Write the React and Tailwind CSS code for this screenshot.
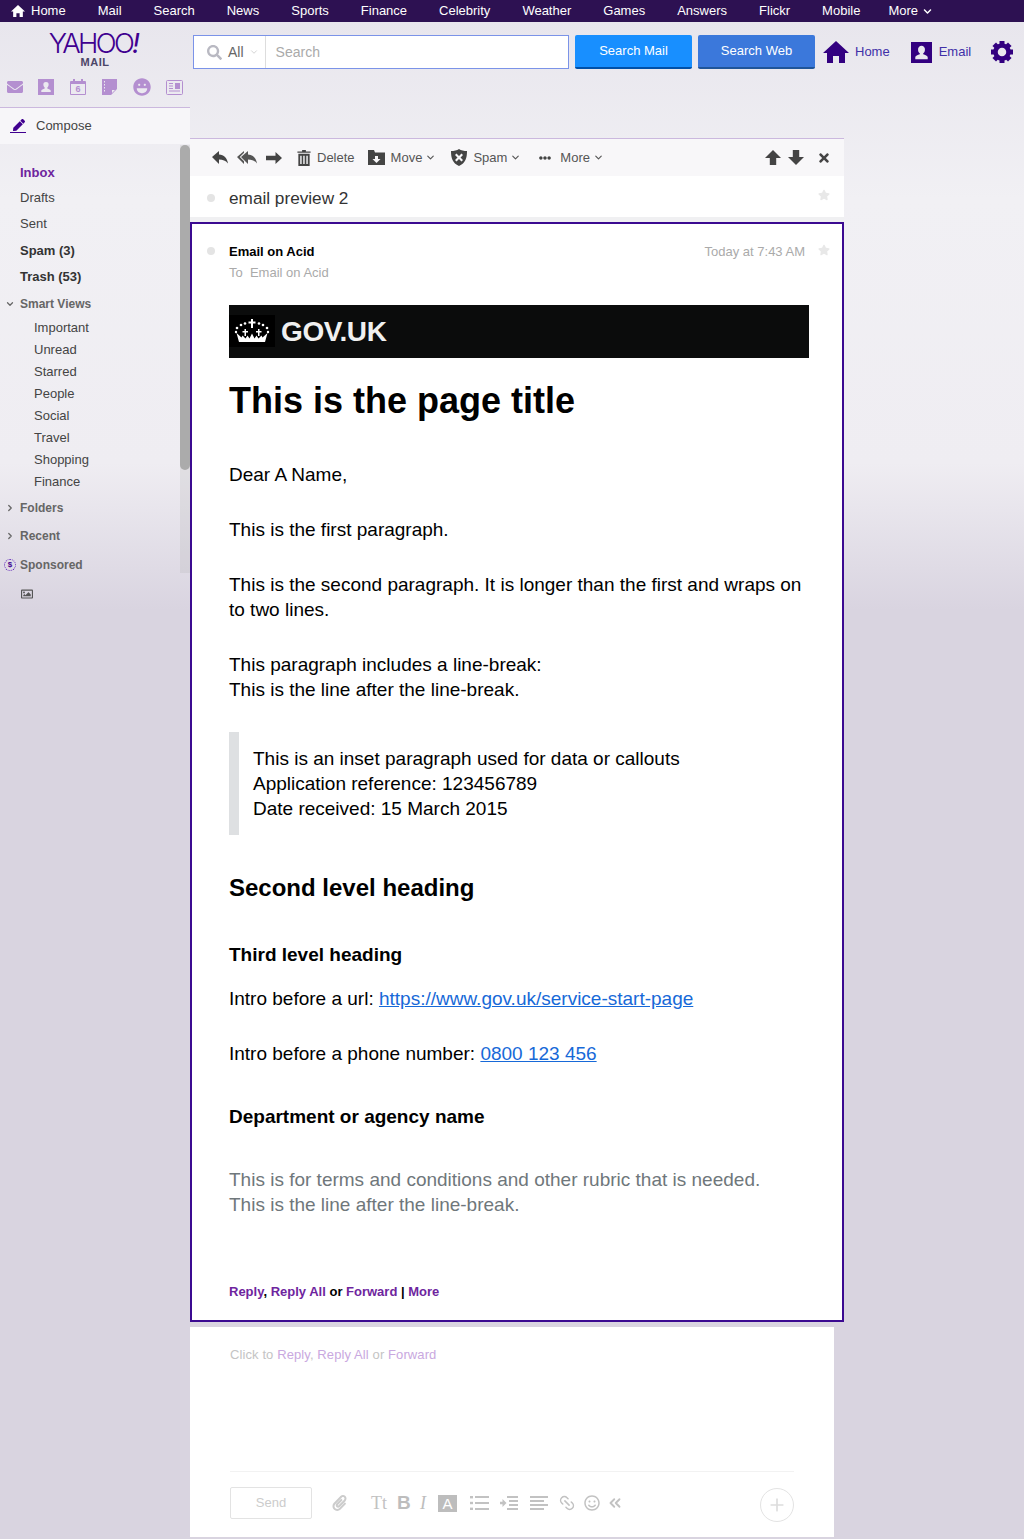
import React from 'react';
import {
  FaChevronDown, FaSearch, FaTimes, FaStar, FaPaperclip, FaRegSmile,
  FaEllipsisH, FaPen, FaEnvelope, FaLaugh, FaRegImage,
} from 'react-icons/fa';
import { LuChevronDown, LuChevronRight, LuChevronsLeft, LuPlus, LuLink2 } from 'react-icons/lu';

const topLinks = ['Mail', 'Search', 'News', 'Sports', 'Finance', 'Celebrity', 'Weather', 'Games', 'Answers', 'Flickr', 'Mobile'];
const smartViews = ['Important', 'Unread', 'Starred', 'People', 'Social', 'Travel', 'Shopping', 'Finance'];

const HouseIcon = ({ className }) => (
  <svg viewBox="0 0 26 22" className={className} fill="currentColor">
    <path d="M13 0 26 12h-4v10h-6v-7h-6v7H4V12H0z" />
  </svg>
);

const ContactIcon = ({ className }) => (
  <svg viewBox="0 0 22 22" className={className} fill="currentColor">
    <path fillRule="evenodd" d="M0 0h22v22H0zM11 4a3.600 3.600 0 0 0-3.600 4c0 1.700.8 3 1.800 3.700v1.200c-2 .7-4.700 1.500-4.700 3.100V18h13v-2c0-1.600-2.700-2.400-4.700-3.100v-1.200c1-.7 1.800-2 1.800-3.700A3.600 3.600 0 0 0 11 4z" />
  </svg>
);

const CalendarIcon = ({ className }) => (
  <div className={`relative ${className}`}>
    <div className="absolute inset-x-0 bottom-0 top-[2px] border border-[#b48fd0] rounded-[1px] border-t-[3px]" />
    <div className="absolute left-[3px] top-0 w-[2px] h-[3px] bg-[#b48fd0]" />
    <div className="absolute right-[3px] top-0 w-[2px] h-[3px] bg-[#b48fd0]" />
    <div className="absolute inset-x-0 top-[5px] text-center text-[9px] leading-[11px] font-bold text-[#b48fd0]">6</div>
  </div>
);

const NotebookIcon = ({ className }) => (
  <svg viewBox="0 0 15 16" className={className} fill="currentColor">
    <path fillRule="evenodd" d="M0 0h15v10l-6 6H0zM2 2v1.500h1V2zm0 3v1.500h1V5zm0 3v1.500h1V8zm0 3v1.500h1V11zm8 0v3l3-3z" />
  </svg>
);

const NewsIcon = ({ className }) => (
  <svg viewBox="0 0 17 15" className={className} fill="none" stroke="currentColor">
    <rect x="0.500" y="0.500" width="16" height="14" rx="1" />
    <path d="M3 3.500h4M3 6h4M3 8.500h4M3 11h11" />
    <path d="M9 3h5v6H9z" fill="currentColor" stroke="none" />
  </svg>
);

const ReplyIcon = ({ className }) => (
  <svg viewBox="0 0 16 13" className={className} fill="currentColor">
    <path d="M0 6 7 0v3.500C12 3.500 15 7 16 12.500 13.500 9.500 11 8.500 7 8.500V13z" />
  </svg>
);

const ReplyAllIcon = ({ className }) => (
  <svg viewBox="0 0 20 13" className={className} fill="currentColor">
    <path d="M0 6 7 0v1.800L2.800 6 7 10.200V13z" />
    <path d="M4 6l7-6v3.500C16 3.500 19 7 20 12.500 17.500 9.500 15 8.500 11 8.500V13z" />
  </svg>
);

const RightIcon = ({ className }) => (
  <svg viewBox="0 0 16 12" className={className} fill="currentColor">
    <path d="M16 6 9.500 0v3.800H0v4.400h9.500V12z" />
  </svg>
);

const UpIcon = ({ className }) => (
  <svg viewBox="0 0 16 15" className={className} fill="currentColor">
    <path d="M8 0 16 8h-4.800v7H4.800V8H0z" />
  </svg>
);

const TrashIcon = ({ className }) => (
  <svg viewBox="0 0 14 17" className={className} fill="currentColor">
    <path fillRule="evenodd" d="M5 0h4v1.500h5V3H0V1.500h5zM1 4h12v13H1zM3 6v9h1.500V6zm3.200 0v9h1.500V6zm3.300 0v9H11V6z" />
  </svg>
);

const MoveIcon = ({ className }) => (
  <svg viewBox="0 0 17 15" className={className} fill="currentColor">
    <path fillRule="evenodd" d="M0 0h6l1 2.500h10V15H0zM7 6v3H4.500l4 4 4-4H10V6z" />
  </svg>
);

const ShieldIcon = ({ className }) => (
  <svg viewBox="0 0 16 17" className={className} fill="currentColor">
    <path fillRule="evenodd" d="M8 0c2 1.500 5 2 8 2 0 7-1.500 12-8 15C1.500 14 0 9 0 2c3 0 6-.5 8-2zM5.500 4.500 4 6l2.500 2.500L4 11l1.500 1.500L8 10l2.500 2.500L12 11 9.500 8.500 12 6l-1.500-1.500L8 7z" />
  </svg>
);

const GearIcon = ({ className }) => (
  <svg viewBox="0 0 22 22" className={className} fill="currentColor">
    <circle cx="11" cy="11" r="6.500" fill="none" stroke="currentColor" strokeWidth="4.500" />
    <rect x="8.500" y="0" width="5" height="4" />
    <rect x="8.500" y="18" width="5" height="4" />
    <rect x="0" y="8.500" width="4" height="5" />
    <rect x="18" y="8.500" width="4" height="5" />
    <rect x="8.500" y="0" width="5" height="4" transform="rotate(45 11 11)" />
    <rect x="8.500" y="18" width="5" height="4" transform="rotate(45 11 11)" />
    <rect x="0" y="8.500" width="4" height="5" transform="rotate(45 11 11)" />
    <rect x="18" y="8.500" width="4" height="5" transform="rotate(45 11 11)" />
  </svg>
);

const ListIcon = ({ className }) => (
  <svg viewBox="0 0 19 14" className={className} fill="currentColor">
    <rect x="0" y="0" width="3" height="2.400" /><rect x="5" y="0" width="14" height="2" />
    <rect x="0" y="5.800" width="3" height="2.400" /><rect x="5" y="6" width="14" height="2" />
    <rect x="0" y="11.600" width="3" height="2.400" /><rect x="5" y="12" width="14" height="2" />
  </svg>
);

const IndentIcon = ({ className }) => (
  <svg viewBox="0 0 18 14" className={className} fill="currentColor">
    <path d="M0 5.800h2.500V3L6.500 7l-4 4V8.200H0z" />
    <rect x="7" y="0" width="11" height="2" /><rect x="9" y="4" width="9" height="2" />
    <rect x="9" y="8" width="9" height="2" /><rect x="7" y="12" width="11" height="2" />
  </svg>
);

const AlignIcon = ({ className }) => (
  <svg viewBox="0 0 18 14" className={className} fill="currentColor">
    <rect x="0" y="0" width="18" height="2" /><rect x="0" y="4" width="14" height="2" />
    <rect x="0" y="8" width="18" height="2" /><rect x="0" y="12" width="14" height="2" />
  </svg>
);

// small crown for the gov.uk banner, dots + crosses on a band
const Crown = () => (
  <svg viewBox="0 0 36 28" className="w-[36px] h-[28px]" fill="#fff">
    <path d="M5 25h26l2.500-9-5 4.500-1-2-3 3-2-3-2 3-2.500-5-2.500 5-2-3-2 3-3-3-1 2-5-4.500z" />
    <rect x="17" y="2" width="2" height="9" />
    <rect x="14.500" y="4.500" width="7" height="2" />
    <circle cx="11" cy="6.500" r="1.300" /><circle cx="25" cy="6.500" r="1.300" />
    <circle cx="7" cy="8" r="1.300" /><circle cx="29" cy="8" r="1.300" />
    <circle cx="3" cy="11" r="1.300" /><circle cx="33" cy="11" r="1.300" />
    <circle cx="2" cy="15" r="1.200" /><circle cx="34" cy="15" r="1.200" />
    <rect x="10.500" y="12" width="1.500" height="7" />
    <rect x="24" y="12" width="1.500" height="7" />
    <rect x="8.500" y="14" width="5.500" height="1.500" />
    <rect x="22" y="14" width="5.500" height="1.500" />
  </svg>
);

const NavSide = () => (
  <div className="w-[190px] shrink-0">
    <div className="h-[47px] flex flex-col items-center pt-[9px]">
      <div className="mr-[4px] font-['Inter',sans-serif] font-light text-[27.500px] leading-[24px] tracking-[-2.700px] text-[#400090] whitespace-nowrap">
        YAHOO<span className="italic font-normal">!</span>
      </div>
      <div className="mt-[2px] text-[11px] leading-[11px] font-bold tracking-[0.500px] text-[#4c4668]">MAIL</div>
    </div>
    <div className="h-[36px] mb-[2px] flex items-center text-[#b48fd0]">
      <FaEnvelope className="w-[16px] h-[16px] ml-[7px]" />
      <ContactIcon className="w-[16px] h-[16px] ml-[15px]" />
      <CalendarIcon className="w-[16px] h-[16px] ml-[16px]" />
      <NotebookIcon className="w-[15px] h-[16px] ml-[16px]" />
      <FaLaugh className="w-[18px] h-[18px] ml-[16px]" />
      <NewsIcon className="w-[17px] h-[15px] ml-[15px]" />
    </div>
    <div className="h-[37px] border-t border-[#cbb8de] bg-[#f7f6f9] flex items-center text-[13px] text-[#444]">
      <span className="ml-[10px] w-[16px] border-b border-[#400090] pb-[1px]">
        <FaPen className="w-[12px] h-[12px] text-[#400090] ml-[3px]" />
      </span>
      <span className="ml-[10px]">Compose</span>
    </div>
    <div className="relative pt-[16px] pl-[20px] text-[13px] text-[#444]">
      <div className="absolute right-0 top-[1px] w-[10px] h-[428px] bg-[#a9a9a9]/20" />
      <div className="absolute right-0 top-[1px] w-[10px] h-[325px] bg-[#ababab] rounded-t-[5px] rounded-b-[5px]" />
      <div className="h-[25px] flex items-center font-bold text-[#6e259e]">Inbox</div>
      <div className="h-[26px] flex items-center">Drafts</div>
      <div className="h-[26px] flex items-center mb-[1px]">Sent</div>
      <div className="h-[26px] flex items-center font-bold text-[#333]">Spam (3)</div>
      <div className="h-[26px] flex items-center font-bold text-[#333] mb-[1px]">Trash (53)</div>
      <div className="h-[26px] flex items-center font-bold text-[12px] text-[#666] relative">
        <LuChevronDown className="absolute -left-[15px] top-[8px] w-[10px] h-[10px]" strokeWidth={3} />
        Smart Views
      </div>
      <div className="pl-[14px]">
        {smartViews.map((v) => (
          <div key={v} className="h-[22px] flex items-center">{v}</div>
        ))}
      </div>
      <div className="mt-[2px] h-[26px] flex items-center font-bold text-[12px] text-[#666] relative">
        <LuChevronRight className="absolute -left-[15px] top-[8px] w-[10px] h-[10px]" strokeWidth={3} />
        Folders
      </div>
      <div className="mt-[2px] h-[26px] flex items-center font-bold text-[12px] text-[#666] relative">
        <LuChevronRight className="absolute -left-[15px] top-[8px] w-[10px] h-[10px]" strokeWidth={3} />
        Recent
      </div>
      <div className="mt-[3px] h-[26px] flex items-center font-bold text-[12px] text-[#666] relative">
        <span className="absolute -left-[16px] top-[7px] w-[12px] h-[12px] rounded-full border border-dotted border-[#5b21b6] text-[8px] leading-[10px] text-center font-bold text-[#400090]">$</span>
        Sponsored
      </div>
      <FaRegImage className="mt-[10px] w-[14px] h-[12px] text-[#555]" />
    </div>
  </div>
);

const SearchBar = () => (
  <div className="h-[116px] pt-[13px] pl-[3px] flex items-start">
    <div className="w-[376px] h-[34px] border border-[#7b93e8] bg-white flex items-center text-[14px]">
      <FaSearch className="ml-[13px] w-[15px] h-[15px] text-[#b9b9c2]" />
      <span className="ml-[6px] text-[#666]">All</span>
      <LuChevronDown className="ml-[5px] w-[10px] h-[10px] text-[#ccc]" />
      <span className="ml-[6px] h-full border-l border-[#ddd]" />
      <span className="ml-[10px] text-[#aaa]">Search</span>
    </div>
    <button className="ml-[6px] w-[117px] h-[34px] rounded-[2px] bg-[#188fff] border-b-2 border-[#0050a8] text-white text-[13px]">Search Mail</button>
    <button className="ml-[6px] w-[117px] h-[34px] rounded-[2px] bg-[#3b78db] border-b-2 border-[#1f5599] text-white text-[13px]">Search Web</button>
    <HouseIcon className="ml-[8px] mt-[6px] w-[26px] h-[22px] text-[#330080]" />
    <span className="ml-[6px] mt-[9px] text-[13px] leading-[16px] text-[#4030a8]">Home</span>
    <ContactIcon className="ml-[21px] mt-[7px] w-[21px] h-[21px] text-[#330080]" />
    <span className="ml-[7px] mt-[9px] text-[13px] leading-[16px] text-[#4030a8]">Email</span>
    <GearIcon className="ml-[20px] mt-[6px] w-[22px] h-[22px] text-[#330080]" />
  </div>
);

const Toolbar = () => (
  <div className="w-[654px] h-[38px] border-t border-[#cbb8de] bg-[#f8f7f9] flex items-center text-[13px] text-[#555]">
    <ReplyIcon className="ml-[22px] w-[16px] h-[13px] text-[#444]" />
    <ReplyAllIcon className="ml-[9px] w-[20px] h-[13px] text-[#555]" />
    <RightIcon className="ml-[9px] w-[16px] h-[12px] text-[#444]" />
    <TrashIcon className="ml-[15px] w-[14px] h-[16px] text-[#444]" />
    <span className="ml-[6px]">Delete</span>
    <MoveIcon className="ml-[13px] w-[17px] h-[15px] text-[#444]" />
    <span className="ml-[6px]">Move</span>
    <LuChevronDown className="ml-[3px] w-[11px] h-[11px]" strokeWidth={2.500} />
    <ShieldIcon className="ml-[15px] w-[16px] h-[17px] text-[#444]" />
    <span className="ml-[6px]">Spam</span>
    <LuChevronDown className="ml-[3px] w-[11px] h-[11px]" strokeWidth={2.500} />
    <FaEllipsisH className="ml-[16px] w-[16px] h-[12px] text-[#444]" />
    <span className="ml-[7px]">More</span>
    <LuChevronDown className="ml-[3px] w-[11px] h-[11px]" strokeWidth={2.500} />
    <UpIcon className="ml-auto w-[16px] h-[15px] text-[#444]" />
    <UpIcon className="ml-[7px] w-[16px] h-[15px] text-[#444] rotate-180" />
    <FaTimes className="ml-[13px] mr-[13px] w-[14px] h-[14px] text-[#444]" />
  </div>
);

const Message = () => (
  <div className="w-[654px] h-[1100px] border-2 border-[#3b0a91] bg-white pl-[37px] pr-[33px] text-[19px] leading-[25px] text-black">
    <div className="relative h-[81px] pt-[18px]">
      <span className="absolute -left-[22px] top-[23px] w-[8px] h-[8px] rounded-full bg-[#e4e4e4]" />
      <div className="text-[13px] leading-[20px] font-bold">Email on Acid</div>
      <div className="mt-[1px] text-[13px] leading-[20px] text-[#aaa]">To&nbsp; Email on Acid</div>
      <div className="absolute right-[4px] top-[18px] text-[13px] leading-[20px] text-[#aaa]">Today at 7:43 AM</div>
      <FaStar className="absolute -right-[21px] top-[20px] w-[12px] h-[12px] text-[#e8e8e8]" />
    </div>
    <div className="w-[580px] h-[53px] bg-[#0b0c0c] flex items-center">
      <div className="ml-0 w-[46px] h-[32px] bg-black flex items-center justify-center -mt-[2px]">
        <Crown />
      </div>
      <span className="ml-[6px] text-[28px] font-bold text-[#f0f0f0] tracking-[-0.400px]">GOV.UK</span>
    </div>
    <h1 className="mt-[20px] text-[36px] leading-[46px] font-bold">This is the page title</h1>
    <p className="mt-[38px]">Dear A Name,</p>
    <p className="mt-[30px]">This is the first paragraph.</p>
    <p className="mt-[30px]">This is the second paragraph. It is longer than the first and wraps on to two lines.</p>
    <p className="mt-[30px]">This paragraph includes a line-break:<br />This is the line after the line-break.</p>
    <div className="mt-[30px] h-[103px] border-l-[10px] border-[#dee0e2] pl-[14px] pt-[14px]">
      This is an inset paragraph used for data or callouts<br />
      Application reference: 123456789<br />
      Date received: 15 March 2015
    </div>
    <h2 className="mt-[36px] text-[24px] leading-[34px] font-bold">Second level heading</h2>
    <h3 className="mt-[37px] text-[19px] leading-[25px] font-bold">Third level heading</h3>
    <p className="mt-[19px]">Intro before a url: <a className="text-[#1769d8] underline">https://www.gov.uk/service-start-page</a></p>
    <p className="mt-[30px]">Intro before a phone number: <a className="text-[#1769d8] underline">0800 123 456</a></p>
    <h3 className="mt-[38px] text-[19px] leading-[25px] font-bold">Department or agency name</h3>
    <p className="mt-[38px] text-[#6f777b]">This is for terms and conditions and other rubric that is needed.<br />This is the line after the line-break.</p>
    <p className="mt-[65px] text-[13px] leading-[20px] font-bold">
      <a className="text-[#6e259e]">Reply</a>, <a className="text-[#6e259e]">Reply All</a> or <a className="text-[#6e259e]">Forward</a> | <a className="text-[#6e259e]">More</a>
    </p>
  </div>
);

const ReplyBox = () => (
  <div className="mt-[5px] w-[644px] h-[210px] bg-white pt-[18px] pl-[40px] pr-[40px] text-[13px] text-[#c4c4c4]">
    <div className="leading-[20px] tracking-[0.100px]">
      Click to <a className="text-[#c9a8e0]">Reply</a>, <a className="text-[#c9a8e0]">Reply All</a> or <a className="text-[#c9a8e0]">Forward</a>
    </div>
    <div className="mt-[106px] h-[16px] border-t border-[#f2f2f2]" />
    <div className="h-[32px] flex items-center text-[#c2c2c2]">
      <button className="w-[82px] h-[32px] border border-[#e3e3e3] rounded-[2px] text-[#ccc] text-[13px]">Send</button>
      <FaPaperclip className="ml-[20px] w-[15px] h-[16px] text-[#ccc]" />
      <span className="ml-[24px] font-['Liberation_Serif',serif] text-[18px] leading-[20px] text-[#c2c2c2]">Tt</span>
      <span className="ml-[10px] w-[13px] text-[19px] leading-[20px] font-bold text-[#bdbdbd]">B</span>
      <span className="ml-[10px] w-[8px] font-['Liberation_Serif',serif] italic text-[18px] leading-[20px] text-[#bdbdbd]">I</span>
      <span className="ml-[10px] w-[19px] h-[17px] bg-[#bdbdbd] text-white text-[15px] leading-[17px] text-center">A</span>
      <ListIcon className="ml-[13px] w-[19px] h-[14px]" />
      <IndentIcon className="ml-[11px] w-[18px] h-[14px]" />
      <AlignIcon className="ml-[12px] w-[18px] h-[14px]" />
      <LuLink2 className="ml-[10px] w-[18px] h-[18px] rotate-45" />
      <FaRegSmile className="ml-[8px] w-[16px] h-[16px]" />
      <LuChevronsLeft className="ml-[6px] w-[18px] h-[18px]" strokeWidth={2.500} />
      <span className="ml-auto mt-[4px] w-[34px] h-[34px] rounded-full border border-[#e3e3e3] flex items-center justify-center">
        <LuPlus className="w-[20px] h-[20px] text-[#ddd]" />
      </span>
    </div>
  </div>
);

export default function App() {
  return (
    <div className="w-[1024px] h-[1539px] overflow-hidden font-['Liberation_Sans',sans-serif] bg-[linear-gradient(180deg,#e8e6ed_22px,#f1f0f4_200px,#efedf2_463px,#d9d4e0_610px)]">
      <div className="h-[22px] bg-[#2d1152] flex items-center text-[13px] text-white">
        <HouseIcon className="ml-[11px] w-[14px] h-[12px]" />
        <span className="ml-[6px]">Home</span>
        {topLinks.map((l) => (
          <span key={l} className="ml-[32px]">{l}</span>
        ))}
        <span className="ml-[28px]">More</span>
        <FaChevronDown className="ml-[5px] w-[9px] h-[9px]" />
      </div>
      <div className="flex">
        <NavSide />
        <div className="flex-1">
          <SearchBar />
          <Toolbar />
          <div className="relative w-[654px] h-[41px] bg-white flex items-center text-[17.200px] text-[#333] pt-[5px]">
            <span className="ml-[17px] w-[8px] h-[8px] rounded-full bg-[#e4e4e4] -mt-[3px]" />
            <span className="ml-[14px]">email preview 2</span>
            <FaStar className="absolute right-[14px] top-[13px] w-[12px] h-[12px] text-[#e8e8e8]" />
          </div>
          <div className="w-[654px] h-[5px] bg-[#f0f0f2]" />
          <Message />
          <ReplyBox />
        </div>
      </div>
    </div>
  );
}
